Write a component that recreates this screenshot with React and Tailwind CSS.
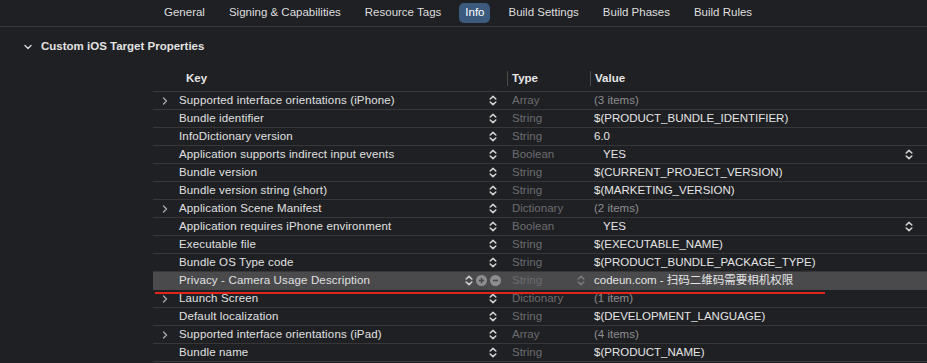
import React from 'react';

const tabs = ['General', 'Signing & Capabilities', 'Resource Tags', 'Info', 'Build Settings', 'Build Phases', 'Build Rules'];

const rows = [
  { key: 'Supported interface orientations (iPhone)', type: 'Array', value: '(3 items)', expand: true, dim: true },
  { key: 'Bundle identifier', type: 'String', value: '$(PRODUCT_BUNDLE_IDENTIFIER)' },
  { key: 'InfoDictionary version', type: 'String', value: '6.0' },
  { key: 'Application supports indirect input events', type: 'Boolean', value: 'YES', bool: true },
  { key: 'Bundle version', type: 'String', value: '$(CURRENT_PROJECT_VERSION)' },
  { key: 'Bundle version string (short)', type: 'String', value: '$(MARKETING_VERSION)' },
  { key: 'Application Scene Manifest', type: 'Dictionary', value: '(2 items)', expand: true, dim: true },
  { key: 'Application requires iPhone environment', type: 'Boolean', value: 'YES', bool: true },
  { key: 'Executable file', type: 'String', value: '$(EXECUTABLE_NAME)' },
  { key: 'Bundle OS Type code', type: 'String', value: '$(PRODUCT_BUNDLE_PACKAGE_TYPE)' },
  { key: 'Privacy - Camera Usage Description', type: 'String', value: 'codeun.com - 扫码二维码需要相机权限', selected: true },
  { key: 'Launch Screen', type: 'Dictionary', value: '(1 item)', expand: true, dim: true },
  { key: 'Default localization', type: 'String', value: '$(DEVELOPMENT_LANGUAGE)' },
  { key: 'Supported interface orientations (iPad)', type: 'Array', value: '(4 items)', expand: true, dim: true },
  { key: 'Bundle name', type: 'String', value: '$(PRODUCT_NAME)' },
];

const Stepper = ({ className = 'text-[#d0d0d0]' }) => (
  <svg width="8" height="11" viewBox="0 0 8 11" className={className} fill="none" stroke="currentColor" strokeWidth="1.6" strokeLinecap="round" strokeLinejoin="round">
    <path d="M1.2 4 L4 1.3 L6.8 4" />
    <path d="M1.2 7 L4 9.7 L6.8 7" />
  </svg>
);

const Circle = ({ plus }) => (
  <svg width="11" height="11" viewBox="0 0 11 11">
    <circle cx="5.5" cy="5.5" r="5.5" fill="#8e8e91" />
    <path d="M2.8 5.5 H8.2" stroke="#4a4a4c" strokeWidth="1.6" />
    {plus && <path d="M5.5 2.8 V8.2" stroke="#4a4a4c" strokeWidth="1.6" />}
  </svg>
);

const Chevron = ({ down }) => (
  <svg width="8" height="8" viewBox="0 0 8 8" fill="none" stroke="currentColor" strokeWidth="1.4" strokeLinecap="round" strokeLinejoin="round">
    {down ? <path d="M1 2.5 L4 5.5 L7 2.5" /> : <path d="M2.5 1 L5.5 4 L2.5 7" />}
  </svg>
);

const App = () => {
  return (
    <div
      className="w-[927px] h-[363px] overflow-hidden bg-[#1f2023] text-[#dcdcdd] relative"
      style={{ fontFamily: '"Liberation Sans", "Noto Sans CJK SC", sans-serif' }}
    >
      {/* Tabs */}
      <div className="h-[27px] border-b border-[#393a3d] flex items-start pt-[3px] pl-[158px] gap-[12px] text-[11.5px]">
        {tabs.map((t) => (
          <div
            key={t}
            className={
              t === 'Info'
                ? 'h-[20px] px-[6px] flex items-center rounded-[5px] bg-[#3b5a7e] text-white'
                : 'h-[20px] px-[6px] flex items-center text-[#dedede]'
            }
          >
            {t}
          </div>
        ))}
      </div>

      {/* Section header */}
      <div className="h-[39px] flex items-center pt-[1px] pl-[24px] gap-[9px] text-[#d8d8d8]">
        <Chevron down />
        <span className="font-bold text-[11.5px] text-[#e2e2e2]">Custom iOS Target Properties</span>
      </div>

      {/* Table */}
      <div className="ml-[153px] text-[11.5px]">
        <div className="h-[26px] grid grid-cols-[354px_83px_1fr] items-center border-b border-[#3a3a3d] font-bold text-[#e6e6e6]">
          <div className="pl-[33px]">Key</div>
          <div className="flex items-center h-[15px] border-l border-[#4a4a4d] pl-[4px]">Type</div>
          <div className="flex items-center h-[15px] border-l border-[#4a4a4d] pl-[4px]">Value</div>
        </div>

        {rows.map((r) => (
          <div
            key={r.key}
            className={
              'h-[18px] grid grid-cols-[354px_83px_1fr] items-center border-b ' +
              (r.selected ? 'bg-[#4a4a4c] border-[#4a4a4c]' : 'border-[#37373a]')
            }
          >
            <div className="flex items-center h-full">
              <div className="w-[26px] pl-[8px] text-[#a8a8aa] flex items-center">
                {r.expand && <Chevron />}
              </div>
              <div className="flex-1 text-[#e0e0e1] whitespace-nowrap tracking-[0.15px]">{r.key}</div>
              {r.selected ? (
                <div className="flex items-center gap-[3px] pr-[6px]">
                  <Stepper />
                  <Circle plus />
                  <Circle />
                </div>
              ) : (
                <div className="pr-[10px] flex items-center">
                  <Stepper />
                </div>
              )}
            </div>
            <div className="flex items-center justify-between pl-[5px] pr-[5px] text-[#6c6c70]">
              <span>{r.type}</span>
              {r.selected && <Stepper className="text-[#7a7a7d]" />}
            </div>
            <div className="flex items-center justify-between pl-[4px] pr-[14px]">
              <span
                className={
                  (r.dim ? 'text-[#8d8d91]' : 'text-[#e4e4e5]') + (r.bool ? ' pl-[9px]' : '') + ' whitespace-nowrap'
                }
              >
                {r.value}
              </span>
              {r.bool && <Stepper />}
            </div>
          </div>
        ))}
      </div>

      {/* Red annotation underline */}
      <div className="absolute left-[155px] top-[292px] w-[670px] h-[2px] bg-[#e0261c]" />
    </div>
  );
};

export default App;
